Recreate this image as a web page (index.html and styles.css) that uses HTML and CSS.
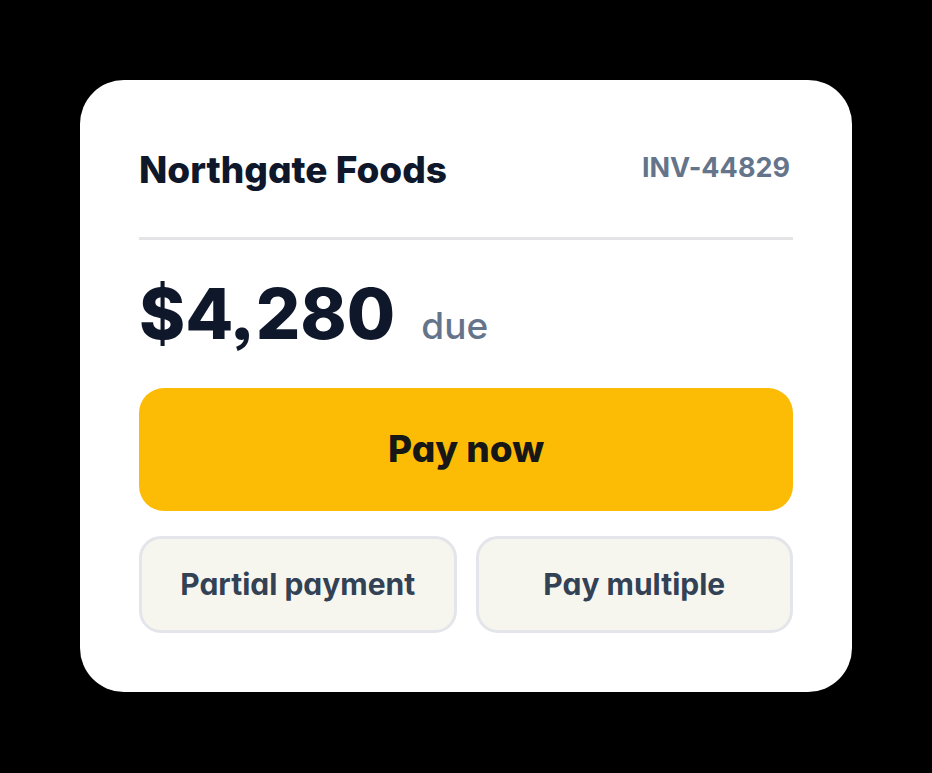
FILE: index.html
```html
<!DOCTYPE html>
<html lang="en">
<head>
<meta charset="utf-8">
<meta name="viewport" content="width=device-width, initial-scale=1">
<title>Invoice INV-44829</title>
<link rel="stylesheet" href="styles.css">
</head>
<body>
<main class="card">
  <header class="card-header">
    <h1 class="vendor">Northgate Foods</h1>
    <span class="invoice">INV-44829</span>
  </header>
  <p class="total"><strong class="amount">$4,280</strong><span class="due">due</span></p>
  <div class="actions">
    <button class="button primary" type="button">Pay now</button>
    <button class="button" type="button">Partial payment</button>
    <button class="button" type="button">Pay multiple</button>
  </div>
</main>
</body>
</html>
```
FILE: styles.css
```css
* {
  box-sizing: border-box;
}

body {
  margin: 0;
  padding: 80px;
  background: #000;
  color: #0f172a;
  font-family: Inter, "Liberation Sans", sans-serif;
  font-feature-settings: "cv11", "ss03";
}

.card {
  padding: 60px 59px 59px;
  border-radius: 44px;
  background: #fff;
}

.card-header {
  display: flex;
  align-items: flex-start;
  justify-content: space-between;
  height: 100px;
  padding: 4px 3px 0 0;
  border-bottom: 3px solid #e4e4e6;
}

.vendor {
  margin: 0;
  font-size: 37px;
  line-height: 52px;
  font-weight: 800;
}

.invoice {
  color: #64748b;
  font-size: 27px;
  line-height: 48px;
  font-weight: 700;
  font-variant-ligatures: no-contextual;
}

.total {
  display: flex;
  align-items: flex-end;
  gap: 26px;
  margin: 28px 0;
}

.amount {
  font-size: 70px;
  line-height: 92px;
  font-weight: 800;
}

.due {
  padding-bottom: 8px;
  color: #64748b;
  font-size: 37px;
  line-height: 52px;
  font-weight: 500;
}

.actions {
  display: grid;
  grid-template-columns: 1fr 1fr;
  gap: 25px 19px;
}

.button {
  height: 97px;
  padding: 0 0 2px;
  border: 3px solid #e4e5ea;
  border-radius: 22px;
  background: #f6f6ef;
  color: #334155;
  font-family: inherit;
  font-feature-settings: inherit;
  font-size: 30px;
  font-weight: 700;
}

.primary {
  grid-column: 1 / -1;
  height: 123px;
  border: 0;
  border-radius: 25px;
  background: #fcbc05;
  color: #171717;
  font-size: 37px;
  font-weight: 800;
}
```
